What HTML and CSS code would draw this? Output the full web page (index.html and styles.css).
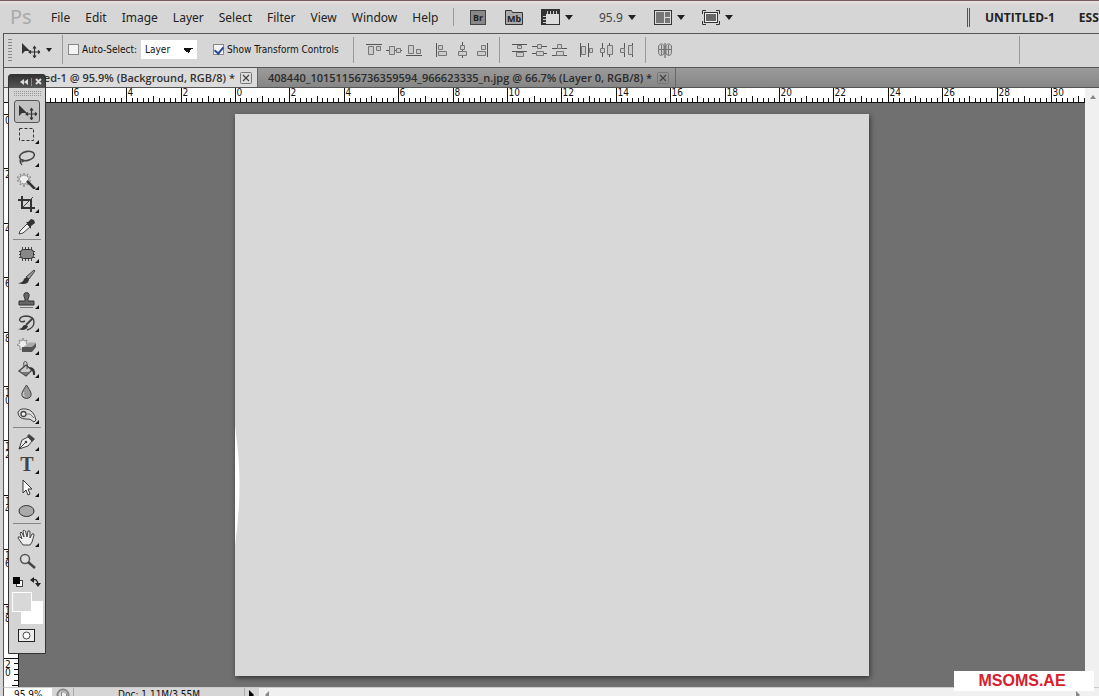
FILE: index.html
```html
<!DOCTYPE html>
<html lang="en">
<head>
<meta charset="utf-8">
<title>Untitled-1</title>
<link rel="stylesheet" href="styles.css">
</head>
<body>
<div class="app">
  <header class="menubar">
    <span class="logo">Ps</span>
    <nav class="menus">
      <button>File</button><button>Edit</button><button>Image</button><button>Layer</button><button>Select</button><button>Filter</button><button>View</button><button>Window</button><button>Help</button>
    </nav>
    <div class="appbar">
      <button class="bridge">Br</button>
      <button class="mini" aria-label="Mini Bridge"><svg width="20" height="17" viewBox="0 0 20 17"><path d="M1.500 15.500V1.500h6l1 2h10v12z" fill="#aaa" stroke="#333"/><text x="3" y="13" class="mbtext">Mb</text></svg></button>
      <button class="drop extras" aria-label="View extras"><svg width="19" height="16" viewBox="0 0 19 16"><rect x=".5" y=".5" width="18" height="15" fill="#ddd" stroke="#333"/><path d="M0 0h19v5H5v11H0z" fill="#333"/><path d="M6.500 5V2M9.500 5V2M12.500 5V2M15.500 5V2M2 7.500h3M2 10.500h3M2 13.500h3" stroke="#ccc"/></svg><i class="arrow"></i></button>
      <button class="drop level"><span>95.9</span><i class="arrow"></i></button>
      <button class="drop arrange" aria-label="Arrange documents"><svg width="18" height="15" viewBox="0 0 18 15"><rect x=".5" y=".5" width="17" height="14" fill="#ddd" stroke="#333"/><path d="M2 2h8v11H2zM11 2h5v5h-5zM11 8h5v5h-5z" fill="#777"/></svg><i class="arrow"></i></button>
      <button class="drop screen" aria-label="Screen mode"><svg width="18" height="15" viewBox="0 0 18 15"><path d="M.5 4V.5H4M14 .5h3.500V4M17.500 11v3.500H14M4 14.500H.5V11" fill="none" stroke="#333"/><rect x="2.500" y="2.500" width="13" height="10" fill="#eee" stroke="#333"/><path d="M4 4h10v7H4z" fill="#666"/></svg><i class="arrow"></i></button>
    </div>
    <div class="spaces"><button>UNTITLED-1</button><button>ESSENTIALS</button></div>
  </header>

  <div class="options">
    <span class="grip"></span>
    <button class="current" aria-label="Move tool"><svg width="20" height="16" viewBox="0 0 20 16"><use href="#move"/></svg><i class="arrow small"></i></button>
    <label class="check auto"><input type="checkbox">Auto-Select:</label>
    <select aria-label="Auto-select target"><option>Layer</option></select>
    <label class="check show"><input type="checkbox" checked>Show Transform Controls</label>
    <div class="align first">
      <button aria-label="Align top"><svg viewBox="0 0 16 16"><path class="l" d="M0 2.500h16"/><path class="b" d="M2.500 4.500h5v8h-5zM10.500 4.500h4v4h-4z"/></svg></button>
      <button aria-label="Align middle"><svg viewBox="0 0 16 16"><path class="l" d="M0 8.500h16"/><path class="b" d="M3.500 4.500h5v8h-5zM10.500 6.500h4v4h-4z"/></svg></button>
      <button aria-label="Align bottom"><svg viewBox="0 0 16 16"><path class="l" d="M0 13.500h16"/><path class="b" d="M2.500 3.500h5v8h-5zM10.500 7.500h4v4h-4z"/></svg></button>
    </div>
    <div class="align second">
      <button aria-label="Align left"><svg viewBox="0 0 16 16"><path class="l" d="M2.500 1v14"/><path class="b" d="M4.500 3.500h4v4h-4zM4.500 9.500h8v4h-8z"/></svg></button>
      <button aria-label="Align center"><svg viewBox="0 0 16 16"><path class="l" d="M8.500 0v16"/><path class="b" d="M6.500 3.500h4v4h-4zM4.500 9.500h8v4h-8z"/></svg></button>
      <button aria-label="Align right"><svg viewBox="0 0 16 16"><path class="l" d="M13.500 1v14"/><path class="b" d="M7.500 3.500h4v4h-4zM3.500 9.500h8v4h-8z"/></svg></button>
    </div>
    <div class="align third">
      <button aria-label="Distribute top"><svg viewBox="0 0 16 16"><path class="l" d="M0 2.500h15M0 9.500h15"/><path class="b" d="M5.500 3.500h4v3h-4zM4.500 10.500h7v4h-7z"/></svg></button>
      <button aria-label="Distribute middle"><svg viewBox="0 0 16 16"><path class="l" d="M0 4.500h15M0 11.500h15"/><path class="b" d="M5.500 2.500h4v4h-4zM4.500 9.500h7v4h-7z"/></svg></button>
      <button aria-label="Distribute bottom"><svg viewBox="0 0 16 16"><path class="l" d="M0 6.500h15M0 13.500h15"/><path class="b" d="M5.500 2.500h4v4h-4zM4.500 9.500h7v4h-7z"/></svg></button>
    </div>
    <div class="align fourth">
      <button aria-label="Distribute left"><svg viewBox="0 0 16 16"><path class="l" d="M1.500 1v14M9.500 1v14"/><path class="b" d="M2.500 4.500h4v8h-4zM10.500 6.500h3v4h-3z"/></svg></button>
      <button aria-label="Distribute center"><svg viewBox="0 0 16 16"><path class="l" d="M3.500 1v14M10.500 1v14"/><path class="b" d="M1.500 6.500h4v4h-4zM8.500 3.500h5v9h-5z"/></svg></button>
      <button aria-label="Distribute right"><svg viewBox="0 0 16 16"><path class="l" d="M5.500 1v14M13.500 1v14"/><path class="b" d="M1.500 6.500h4v4h-4zM9.500 3.500h4v9h-4z"/></svg></button>
    </div>
    <div class="align fifth">
      <button aria-label="Auto-align layers"><svg viewBox="0 0 16 16"><path class="b" d="M7 3.500Q4 0 1.500 4V9q0 5 3 4.500L7 12zM9 3.500Q12 0 14.500 4V9q0 5-3 4.500L9 12z"/><path class="l" d="M8 1v15"/><path class="b" d="M1 7.500h14M4.500 3v10M11.500 3v10"/></svg></button>
    </div>
    <div class="rest"></div>
  </div>

  <div class="tabs">
    <div class="tab active"><span>Untitled-1 @ 95.9% (Background, RGB/8) *</span><button class="close" aria-label="Close"><svg width="12" height="12"><use href="#x"/></svg></button></div>
    <div class="tab"><span>408440_10151156736359594_966623335_n.jpg @ 66.7% (Layer 0, RGB/8) *</span><button class="close" aria-label="Close"><svg width="12" height="12"><use href="#x"/></svg></button></div>
  </div>

  <main class="work">
    <div class="corner"></div>
    <div class="hruler"><svg id="hr" width="100%" height="15"></svg></div>
    <div class="vruler"><svg id="vr" width="14" height="100%"></svg></div>
    <div class="canvas"><div class="document"><svg width="6" height="120" viewBox="0 0 6 120"><path d="M0 0Q3 22 4 40Q5 60 4 78Q3 98 0 120z" fill="#fff"/></svg></div></div>
    <div class="vscroll"><i></i></div>
  </main>

  <footer class="status">
    <span class="percent">95.9%</span>
    <span class="export"><svg width="14" height="14" viewBox="0 0 14 14" fill="none" stroke="#888"><circle cx="7" cy="7" r="5.500" stroke-width="2"/><path d="M5.500 10V4h3l2 2v4z" fill="#eee"/></svg></span>
    <span class="docsize">Doc: 1.11M/3.55M</span>
    <button class="more" aria-label="Status options"><svg width="6" height="10"><path d="M0 0l5 5-5 5z"/></svg></button>
    <span class="hscroll"><svg width="6" height="8"><path d="M5 0L1 4l4 4" fill="#888"/></svg><svg width="6" height="8"><path d="M1 0l4 4-4 4" fill="#888"/></svg></span>
  </footer>

  <aside class="panel">
    <div class="panelhead"><svg width="8" height="6"><path d="M4 0v6L0 3zM8 0v6L4 3z" fill="#ddd"/></svg><i></i><svg width="7" height="7"><path d="M1 1l5 5M6 1L1 6" stroke="#ddd" stroke-width="2"/></svg></div>
    <div class="dots"></div>
    <div class="tools">
      <button class="tool on" aria-label="Move"><svg viewBox="0 0 20 16"><use href="#move"/></svg></button>
      <button class="tool menu" aria-label="Marquee"><svg viewBox="0 0 20 16"><rect x="2.500" y="1.500" width="14" height="12" fill="none" stroke="#333" stroke-dasharray="3 2"/></svg></button>
      <button class="tool menu" aria-label="Lasso"><svg viewBox="0 0 20 16"><ellipse cx="10" cy="6" rx="7.500" ry="4.500" transform="rotate(-12 10 6)" fill="none" stroke="#444" stroke-width="1.600"/><path d="M4 9q-2 2 0 3 3 0 2-2-2-1-3 1 0 2 2 4" fill="none" stroke="#444" stroke-width="1.200"/></svg></button>
      <button class="tool menu" aria-label="Magic wand"><svg viewBox="0 0 20 16"><path d="M7 0l1 3 3-2-1 3 4 0-3 2 3 2-4 0 1 4-3-2-1 4-1-4-3 2 1-4-4 0 3-2-3-2 4 0-1-3 3 2z" fill="#eee" stroke="#777" stroke-width=".7"/><path d="M10 8l8 8" stroke="#333" stroke-width="2.500"/></svg></button>
      <button class="tool menu" aria-label="Crop"><svg viewBox="0 0 20 16"><path d="M1 4h13v12M5 0v12h13" fill="none" stroke="#333" stroke-width="2"/><path d="M6 11L16 1" stroke="#444"/></svg></button>
      <button class="tool menu" aria-label="Eyedropper"><svg viewBox="0 0 20 16"><path d="M2 15l1-3 7-7 3 3-7 6z" fill="#f2f2f2" stroke="#444"/><path d="M9 3l2 0 3-3 3 1 1 3-4 3 0 3z" fill="#333"/></svg></button>
      <hr>
      <button class="tool menu" aria-label="Patch"><svg viewBox="0 0 20 16"><path d="M5.500 1v14M8.500 1v14M11.500 1v14M14.500 1v14M2 5.500h16M2 8.500h16M2 11.500h16" stroke="#444"/><rect x="3.500" y="3.500" width="13" height="9" rx="3" fill="#888" stroke="#333"/></svg></button>
      <button class="tool menu" aria-label="Brush"><svg viewBox="0 0 20 16"><path d="M9 8l8-7 1 1-6 8z" fill="#999" stroke="#444"/><path d="M1 14q5 0 6-4 2-3 5 0 0 5-6 5-3 0-5-1z" fill="#333"/></svg></button>
      <button class="tool menu" aria-label="Clone stamp"><svg viewBox="0 0 20 16"><path d="M8 7Q5 1 9.500.5 14 1 11 7l0 2h6v4H2V9h6z" fill="#666" stroke="#333"/><path d="M3 15.500h13" stroke="#777"/></svg></button>
      <button class="tool menu" aria-label="History brush"><svg viewBox="0 0 20 16"><path d="M8 6Q4 8 2.500 5 3 1 10 1q7 1 7 6 0 6-7 8" fill="none" stroke="#444" stroke-width="1.400"/><path d="M1 14q4 0 5-3 2-2 5 0-1 4-6 4z" fill="#333"/><path d="M9 10l7-7" stroke="#444" stroke-width="2"/></svg></button>
      <button class="tool menu" aria-label="Background eraser"><svg viewBox="0 0 20 16"><path d="M6 0l1 3 3-1-1 3 3 2-3 1 0 4-3-2-3 2 0-4-3-1 3-2-1-3 3 1z" fill="#eee" stroke="#777" stroke-width=".7"/><path d="M6 9.500l6-5h7l-4 5z" fill="#aaa"/><path d="M5 9h10v5H5zM15 9l4-4v4l-4 5z" fill="#555"/></svg></button>
      <button class="tool menu" aria-label="Paint bucket"><svg viewBox="0 0 20 16"><path d="M2 10l7-6 6 5-6 6z" fill="#ccc" stroke="#444" stroke-width="1.300"/><path d="M7 6Q6 0 8.500.5T10 8" fill="none" stroke="#444"/><path d="M4 11h9l-4 3.500z" fill="#777"/><path d="M12 6q7 0 6 8l-2 0q0-5-3-6z" fill="#333"/></svg></button>
      <button class="tool menu" aria-label="Blur"><svg viewBox="0 0 20 16"><path d="M9.500 1Q13 6 14 9q1 5-4.500 5.500Q4 14 5 9q1-3 4.500-8z" fill="#999" stroke="#444"/><path d="M7 8q-2 4 1 4" fill="none" stroke="#ddd"/></svg></button>
      <button class="tool menu" aria-label="Sponge"><svg viewBox="0 0 20 16"><path d="M1 5Q3 1 9 2q8 1 10 11l-2 2q-4-4-8-3-8 0-8-7z" fill="#ddd" stroke="#444"/><circle cx="6.500" cy="7" r="2.500" fill="#eee" stroke="#444" stroke-width="1.300"/><path d="M9 7h4l4 4" fill="none" stroke="#777"/></svg></button>
      <hr>
      <button class="tool menu" aria-label="Pen"><svg viewBox="0 0 20 16"><path d="M2 15l3-9 6-3 4 4-4 5z" fill="#eee" stroke="#444"/><path d="M2 15l7-7" stroke="#333"/><circle cx="9" cy="8" r="1.300" fill="#444"/><path d="M10 2l2-2 6 5-3 3z" fill="#444"/></svg></button>
      <button class="tool menu type" aria-label="Type">T</button>
      <button class="tool menu" aria-label="Path selection"><svg viewBox="0 0 20 16"><path d="M6 0v13l3-3 2 5 2-1-2-5h4z" fill="#fff" stroke="#333"/></svg></button>
      <button class="tool menu" aria-label="Ellipse"><svg viewBox="0 0 20 16"><ellipse cx="9.500" cy="8" rx="7.500" ry="5.500" fill="#aaa" stroke="#333"/></svg></button>
      <hr>
      <button class="tool menu" aria-label="Hand"><svg viewBox="0 0 20 16"><path d="M6 15L1 8q0-2 2-1l2 2-2-6q1-2 2 0l2 4-1-6q1-2 2.500 0L10 7l1-6q2-1 2 1v6l2-4q2-1 2 1l-2 7-2 3z" fill="#eee" stroke="#444"/></svg></button>
      <button class="tool" aria-label="Zoom"><svg viewBox="0 0 20 16"><circle cx="8" cy="6" r="4.500" fill="#ddd" stroke="#555" stroke-width="1.500"/><path d="M11 9l7 6" stroke="#444" stroke-width="2.500"/></svg></button>
    </div>
    <div class="defaults">
      <svg width="10" height="10"><rect x="3.500" y="3.500" width="6" height="6" fill="#fff" stroke="#444"/><path d="M0 0h7v7H0z"/></svg>
      <svg width="11" height="10"><path d="M2.500 2.500q5-1 5.500 5" fill="none" stroke="#222" stroke-width="1.300"/><path d="M0 3l4-3v6zM5 6h6L8 10z" fill="#222"/></svg>
    </div>
    <div class="colors"><i class="back"></i><i class="front"></i></div>
    <button class="mask" aria-label="Quick mask"><svg width="9" height="9"><circle cx="4.500" cy="4.500" r="3.500" fill="#fff" stroke="#444"/></svg></button>
  </aside>
  <div class="watermark">MSOMS.AE</div>
</div>
<svg class="defs" width="0" height="0">
  <symbol id="move" viewBox="0 0 20 16"><path d="M2 1v11l3-3h5z" fill="#333"/><path d="M14.500 5v10M9.500 10h10M13 6.500l1.500-2 1.500 2M13 13.500l1.500 2 1.500-2M11 8.500L9 10l2 1.500M18 8.500l2 1.500-2 1.500" fill="none" stroke="#333" stroke-width="1.200"/></symbol>
  <symbol id="x" viewBox="0 0 12 12"><rect x=".5" y=".5" width="11" height="11" rx="1" fill="none" stroke="#777"/><path d="M3 3l6 6M9 3L3 9" stroke="#444" stroke-width="1.200"/></symbol>
</svg>
<script src="rulers.js"></script>
</body>
</html>
```
FILE: styles.css
```css
* { box-sizing: border-box; }
body { margin: 0; font: 12px "Noto Sans", sans-serif; color: #222; background: #d6d6d6; }
button { border: 0; padding: 0; background: none; font: inherit; color: inherit; display: flex; align-items: center; white-space: nowrap; }
svg { display: block; flex: none; }
.defs { position: absolute; }
.app { position: relative; height: 100vh; overflow: hidden; display: grid; grid-template-columns: 100%; grid-template-rows: 33px 34px 21px 1fr 9px; }

.menubar { display: flex; align-items: center; border-top: 1px solid #785c60; background: linear-gradient(#e9dfdf, #d6d6d6 5px); }
.logo { width: 51px; padding-left: 10px; font-size: 20px; line-height: 24px; color: #aaa; }
.menus { display: flex; gap: 15px; width: 402px; }
.appbar { display: flex; align-items: center; height: 18px; border-left: 1px solid #999; padding-left: 16px; }
.bridge { width: 16px; height: 15px; justify-content: center; background: #888; border: 1px solid #444; font-size: 9px; font-weight: 700; }
.mini { margin-left: 18px; }
.mbtext { font: 700 9px "Noto Sans", sans-serif; fill: #222; }
.drop { gap: 5px; }
.extras { margin-left: 17px; }
.level { margin-left: 26px; color: #444; }
.arrange { margin-left: 18px; }
.screen { margin-left: 17px; }
.arrow { border: 4px solid transparent; border-top: 5px solid #222; border-bottom: 0; }
.arrow.small { border-width: 4px 3px 0; }
.spaces { display: flex; gap: 24px; margin-left: auto; width: 132px; height: 19px; padding-left: 15px; border-left: 3px double #555; overflow: hidden; font: 700 12px "Open Sans", sans-serif; }

.options { display: flex; align-items: center; padding: 0 0 2px 4px; border-top: 1px solid #555; border-left: 1px solid #555; margin-left: 3px; font: 10px "DejaVu Sans Condensed", "DejaVu Sans", sans-serif; color: #111; }
.grip { width: 4px; height: 24px; background: radial-gradient(circle, #888 1px, transparent 1px) 0 0 / 2px 3px; }
.current { gap: 6px; width: 51px; height: 29px; padding-left: 8px; border-right: 1px solid #999; }
.check { display: flex; align-items: center; gap: 3px; white-space: nowrap; }
.auto { margin-left: 5px; width: 73px; }
.show { margin-left: 16px; width: 141px; height: 26px; border-right: 1px solid #999; }
.check input { appearance: none; flex: none; display: grid; place-items: center; width: 11px; height: 11px; margin: 0; border: 1px solid #888; background: #f4f4f4; }
.check input:checked::after { content: ""; width: 4px; height: 7px; border: solid #2c4c94; border-width: 0 2px 2px 0; transform: rotate(40deg); }
.options select { appearance: none; width: 56px; height: 19px; padding: 0 4px; border: 0; border-radius: 0; color: #111; font: inherit; background: linear-gradient(to top right, transparent 50%, #111 50%) no-repeat 42px 8px / 5px 5px, linear-gradient(to top left, transparent 50%, #111 50%) no-repeat 47px 8px / 5px 5px, #fff; }
.align { display: flex; align-items: center; gap: 4px; height: 26px; }
.align svg { width: 16px; height: 16px; }
.align .l { stroke: #555; fill: none; }
.align .b { stroke: #777; fill: #ccc; }
.first { margin-left: 12px; }
.second { margin-left: 12px; width: 66px; border-right: 1px solid #999; }
.third { margin-left: 12px; }
.fourth { margin-left: 11px; width: 67px; border-right: 1px solid #999; }
.fifth { margin-left: 11px; }
.rest { margin-left: auto; width: 80px; height: 28px; border-left: 1px solid #999; }

.tabs { display: flex; margin-left: 3px; border: 1px solid #555; border-right: 0; background: linear-gradient(#9b9b9b, #868686); font: 600 11px "Open Sans", sans-serif; }
.tab { display: flex; align-items: center; justify-content: space-between; width: 418px; padding: 0 6px 0 10px; border-right: 1px solid #666; white-space: nowrap; color: #2b2b2b; }
.active { width: 254px; padding: 0 5px 0 0; background: #dcdcdc; justify-content: flex-end; gap: 5px; color: #333; }

.work { display: grid; grid-template: 15px 1fr / 15px 1fr 14px; min-height: 0; margin-left: 3px; border-left: 1px solid #555; }
.corner { background: #eee; border-bottom: 1px solid #111; }
.hruler { background: #fff; border-bottom: 1px solid #111; min-width: 0; overflow: hidden; }
.vruler { background: #fff; border-right: 1px solid #111; grid-row: 2; min-height: 0; overflow: hidden; }
.hruler text, .vruler text { font: 10px "DejaVu Sans Condensed", "DejaVu Sans", sans-serif; fill: #111; }
.canvas { background: #707070; grid-row: 2; overflow: hidden; padding: 11px 0 0 216px; min-height: 0; }
.document { width: 634px; height: 562px; padding-top: 312px; background: #d8d8d8; box-shadow: 1px 2px 5px #333; }
.vscroll { grid-column: 3; grid-row: 1 / 3; background: #f0f0f0; padding: 7px 5px; }
.vscroll i { display: block; border: 3px solid transparent; border-bottom: 4px solid #888; border-top: 0; width: 6px; }

.status { display: flex; margin-left: 3px; border-top: 1px solid #ccc; border-left: 1px solid #555; font: 10px/13px "DejaVu Sans Condensed", "DejaVu Sans", sans-serif; overflow: hidden; color: #111; }
.percent { width: 48px; padding-left: 10px; background: #fff; }
.export { width: 22px; padding-left: 4px; border-right: 1px solid #aaa; }
.docsize { width: 171px; text-align: center; border-right: 1px solid #aaa; }
.more { width: 14px; align-items: flex-start; justify-content: center; padding-top: 2px; }
.hscroll { flex: 1; display: flex; justify-content: space-between; padding: 3px 18px 0 5px; background: #f0f0f0; }

.panel { position: absolute; left: 8px; top: 74px; width: 38px; padding-bottom: 11px; background: #d4d4d4; border: 1px solid #333; border-radius: 3px 3px 0 0; }
.panelhead { display: flex; align-items: center; justify-content: flex-end; gap: 3px; height: 13px; padding-right: 3px; background: linear-gradient(#333, #555); }
.panelhead i { width: 1px; height: 8px; background: #888; }
.dots { height: 6px; margin: 3px 4px; background: conic-gradient(#999 25%, transparent 0) 0 0 / 2px 2px; }
.tools { display: flex; flex-direction: column; align-items: center; }
.tool { position: relative; justify-content: center; width: 26px; height: 23px; }
.tool svg { width: 20px; height: 16px; }
.on { border: 1px solid #555; border-radius: 3px; background: #c2c2c2; }
.menu::after { content: ""; position: absolute; right: 1px; bottom: 2px; border: 2px solid #111; border-top-color: transparent; border-left-color: transparent; }
.type { font: 700 20px "Liberation Serif", serif; color: #444; }
.tools hr { width: 28px; height: 1px; margin: 1px 0 2px; border: 0; background: #888; }
.defaults { display: flex; justify-content: space-between; height: 20px; align-items: center; padding: 0 4px; }
.colors { display: grid; grid-template: 9px 11px 12px / 9px 11px 11px; padding-left: 3px; }
.back { grid-area: 2 / 2 / 4 / 4; background: #fff; }
.front { grid-area: 1 / 1 / 3 / 3; background: #d8d8d8; border: 1px solid #fff; }
.mask { justify-content: center; width: 17px; height: 13px; margin: 5px 0 0 9px; border: 1px solid #222; background: #eee; }
.watermark { position: absolute; right: 5px; bottom: 5px; width: 140px; height: 20px; padding-right: 4px; background: #fff; color: #d6202c; font: 700 16px/20px "Liberation Sans", sans-serif; text-align: center; }
```
FILE: rulers.js
```js
const NS = "http://www.w3.org/2000/svg";
const UNIT = 27.2;

function add(svg, name, attrs, text) {
  const el = document.createElementNS(NS, name);
  for (const key in attrs) el.setAttribute(key, attrs[key]);
  if (text !== undefined) el.textContent = text;
  svg.append(el);
}

function drawRuler(svg, origin, vertical) {
  const depth = 14;
  const box = svg.getBoundingClientRect();
  const length = vertical ? box.height : box.width;
  for (let i = -40; ; i++) {
    const pos = Math.round(origin + i * UNIT / 5) + 0.5;
    if (pos > length) break;
    if (pos < 0) continue;
    const major = i % 10 === 0;
    const size = major ? depth : i % 5 === 0 ? 6 : 4;
    const d = vertical ? `M${depth - size} ${pos}h${size}` : `M${pos} ${depth - size}v${size}`;
    add(svg, "path", { d, stroke: "#111" });
    if (!major) continue;
    const label = String(Math.abs(i / 5));
    if (vertical) {
      [...label].forEach((c, n) => add(svg, "text", { x: 1, y: pos + 9 + n * 8 }, c));
    } else {
      add(svg, "text", { x: pos + 1, y: 8 }, label);
    }
  }
}

drawRuler(document.getElementById("hr"), 216, false);
drawRuler(document.getElementById("vr"), 11, true);
```
